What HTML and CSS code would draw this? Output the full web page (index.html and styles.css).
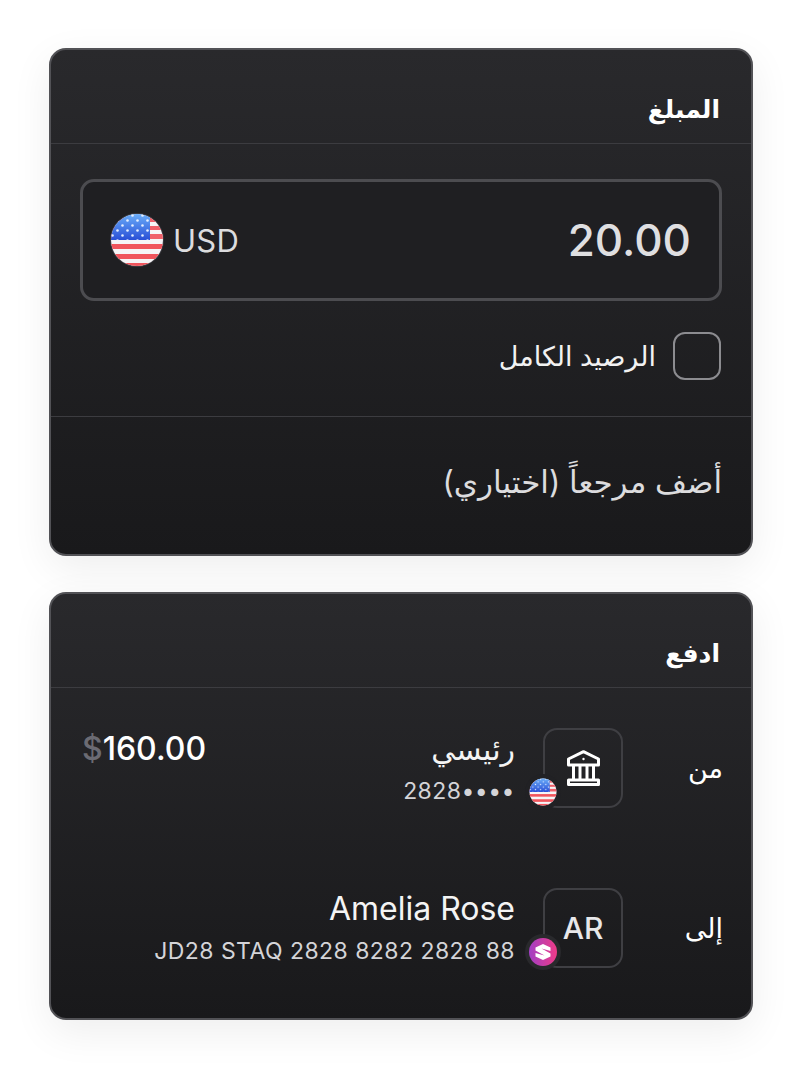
FILE: index.html
```html
<!DOCTYPE html>
<html lang="ar" dir="rtl">
<head>
  <meta charset="UTF-8">
  <title>دفع</title>
  <link rel="stylesheet" href="styles.css">
</head>
<body>
  <svg class="defs" width="0" height="0" aria-hidden="true">
    <defs>
      <clipPath id="flag-clip"><circle cx="27" cy="27" r="26"/></clipPath>
      <pattern id="stars" width="10" height="10" patternUnits="userSpaceOnUse">
        <circle cx="2.500" cy="2.500" r="1.300" fill="#e6efff"/>
        <circle cx="7.500" cy="7.500" r="1.300" fill="#e6efff"/>
      </pattern>
      <linearGradient id="blue" x1="0" y1="0" x2="0" y2="1">
        <stop offset="0" stop-color="#6cb0fa"/>
        <stop offset="1" stop-color="#2a4fd6"/>
      </linearGradient>
      <linearGradient id="brand" x1="0" y1="0" x2="1" y2="0">
        <stop offset="0" stop-color="#a23ec4"/>
        <stop offset="1" stop-color="#ee3b87"/>
      </linearGradient>
      <symbol id="flag" viewBox="0 0 54 54">
        <circle cx="27" cy="27" r="27" fill="#3a3a40"/>
        <g clip-path="url(#flag-clip)">
          <rect width="54" height="54" fill="#f6f4f6"/>
          <rect y="5" width="54" height="4" fill="#f0606a"/>
          <rect y="13" width="54" height="4" fill="#f0606a"/>
          <rect y="21" width="54" height="5" fill="#f0606a"/>
          <rect y="31" width="54" height="5" fill="#f0545c"/>
          <rect y="41" width="54" height="5" fill="#f0545c"/>
          <rect y="50" width="54" height="4" fill="#f0545c"/>
          <rect width="40" height="27" fill="url(#blue)"/>
          <rect width="40" height="27" fill="url(#stars)"/>
        </g>
      </symbol>
    </defs>
  </svg>

  <section class="card">
    <h2 class="card-title">المبلغ</h2>
    <div class="amount-body">
      <div class="amount-box">
        <span class="amount-value" dir="ltr">20.00</span>
        <span class="currency" dir="ltr">
          <svg class="flag-lg"><use href="#flag"/></svg>
          USD
        </span>
      </div>
      <label class="full-balance">
        <span class="checkbox"></span>
        <span>الرصيد الكامل</span>
      </label>
    </div>
    <div class="reference">أضف مرجعاً (اختياري)</div>
  </section>

  <section class="card">
    <h2 class="card-title">ادفع</h2>
    <div class="pay-body">
      <div class="pay-row">
        <span class="pay-label">من</span>
        <div class="avatar">
          <svg class="bank" viewBox="0 0 33 36" fill="none" stroke="#fff" stroke-width="3" stroke-linejoin="round">
            <path d="M16.500 1.700 31.500 9v6h-30V9z"/>
            <path d="M6.500 15v15M13 15v15M20 15v15M26.500 15v15"/>
            <path d="M1.500 30h30v4.500h-30z"/>
            <circle cx="16.500" cy="9" r="1.200" fill="#fff" stroke="none"/>
          </svg>
          <svg class="flag-sm"><use href="#flag"/></svg>
        </div>
        <div class="pay-info">
          <div class="pay-name pay-name-ar">رئيسي</div>
          <div class="pay-sub" dir="ltr">2828••••</div>
        </div>
        <div class="balance" dir="ltr"><span class="dollar">$</span>160.00</div>
      </div>
      <div class="pay-row">
        <span class="pay-label">إلى</span>
        <div class="avatar avatar-text">
          AR
          <svg class="brand" viewBox="0 0 36 36">
            <circle cx="18" cy="18" r="18" fill="#29292c"/>
            <circle cx="18" cy="18" r="14" fill="url(#brand)"/>
            <path d="M18 10 25.500 13.500v3.500l-9-2.500 9 5v3L18 26 10.500 22.500v-3.500l9 2.500-9-5v-3z" fill="#fff"/>
          </svg>
        </div>
        <div class="pay-info">
          <div class="pay-name" dir="ltr">Amelia Rose</div>
          <div class="pay-sub" dir="ltr">JD28 STAQ 2828 8282 2828 88</div>
        </div>
      </div>
    </div>
  </section>
</body>
</html>
```

FILE: styles.css
```css
body {
  margin: 0;
  padding: 48px 47px 48px 49px;
  background-color: #fff;
  font-family: Inter, "Noto Sans", "DejaVu Sans", sans-serif;
  color: #fff;
}

.defs {
  display: block;
  height: 0;
}

.card {
  width: 704px;
  box-sizing: border-box;
  margin-bottom: 36px;
  background: linear-gradient(#29292c, #19191b);
  border: 2px solid #525256;
  border-radius: 17px;
  box-shadow: 0 12px 40px rgba(0,0,0,0.07);
}

.card-title {
  margin: 0;
  height: 94px;
  box-sizing: border-box;
  padding: 24px 31px 0;
  display: flex;
  align-items: center;
  font-size: 25px;
  font-weight: 700;
  border-bottom: 1px solid #3c3c40;
}

.amount-body {
  padding: 35px 29px 36px;
  border-bottom: 1px solid #3c3c40;
}

.amount-box {
  height: 122px;
  box-sizing: border-box;
  padding: 0 28px 0 27px;
  display: flex;
  align-items: center;
  justify-content: space-between;
  border: 3px solid #4c4c50;
  border-radius: 14px;
  background-color: #1f1f22;
}

.amount-value {
  font-size: 44px;
  font-weight: 500;
  color: #dfdfe1;
}

.currency {
  display: flex;
  align-items: center;
  gap: 9px;
  font-size: 31px;
  letter-spacing: 0.3px;
  color: #dcdcde;
}

.flag-lg {
  width: 54px;
  height: 54px;
}

.full-balance {
  margin-top: 31px;
  padding-right: 1px;
  display: flex;
  align-items: center;
  gap: 17px;
  font-size: 27px;
  color: #f2f2f2;
}

.checkbox {
  width: 48px;
  height: 48px;
  box-sizing: border-box;
  border: 2px solid #8c8c90;
  border-radius: 12px;
}

.reference {
  height: 137px;
  box-sizing: border-box;
  padding: 0 29px 8px;
  display: flex;
  align-items: center;
  font-size: 31px;
  color: #dcdcde;
}

.pay-body {
  padding: 40px 29px 50px;
  display: flex;
  flex-direction: column;
  gap: 80px;
}

.pay-row {
  display: flex;
  align-items: flex-start;
}

.pay-label {
  width: 100px;
  height: 80px;
  margin-right: -1px;
  display: flex;
  align-items: center;
  font-size: 27px;
  font-weight: 500;
}

.avatar {
  position: relative;
  width: 80px;
  height: 80px;
  box-sizing: border-box;
  display: flex;
  align-items: center;
  justify-content: center;
  border: 2px solid #3f3f43;
  border-radius: 14px;
}

.avatar-text {
  font-size: 30px;
  font-weight: 500;
  color: #e8e8ea;
}

.bank {
  width: 33px;
  height: 36px;
}

.flag-sm {
  position: absolute;
  left: -16px;
  bottom: 0;
  width: 28px;
  height: 28px;
  border-radius: 50%;
  box-shadow: 0 0 0 4px #212124;
}

.brand {
  position: absolute;
  left: -20px;
  bottom: -4px;
  width: 36px;
  height: 36px;
}

.pay-info {
  margin-right: 28px;
  padding-top: 1px;
  flex: 1;
}

.pay-name {
  font-size: 32px;
  line-height: 40px;
  margin-bottom: 6px;
  color: #f4f4f4;
  text-align: right;
}

.pay-name-ar {
  font-size: 30px;
}

.pay-sub {
  font-size: 23px;
  line-height: 32px;
  letter-spacing: 0.45px;
  color: #d4d4d8;
  text-align: right;
}

.balance {
  margin-left: 2px;
  margin-top: 1px;
  font-size: 32px;
  font-weight: 500;
  line-height: 40px;
}

.dollar {
  color: #6b6b73;
}
```
